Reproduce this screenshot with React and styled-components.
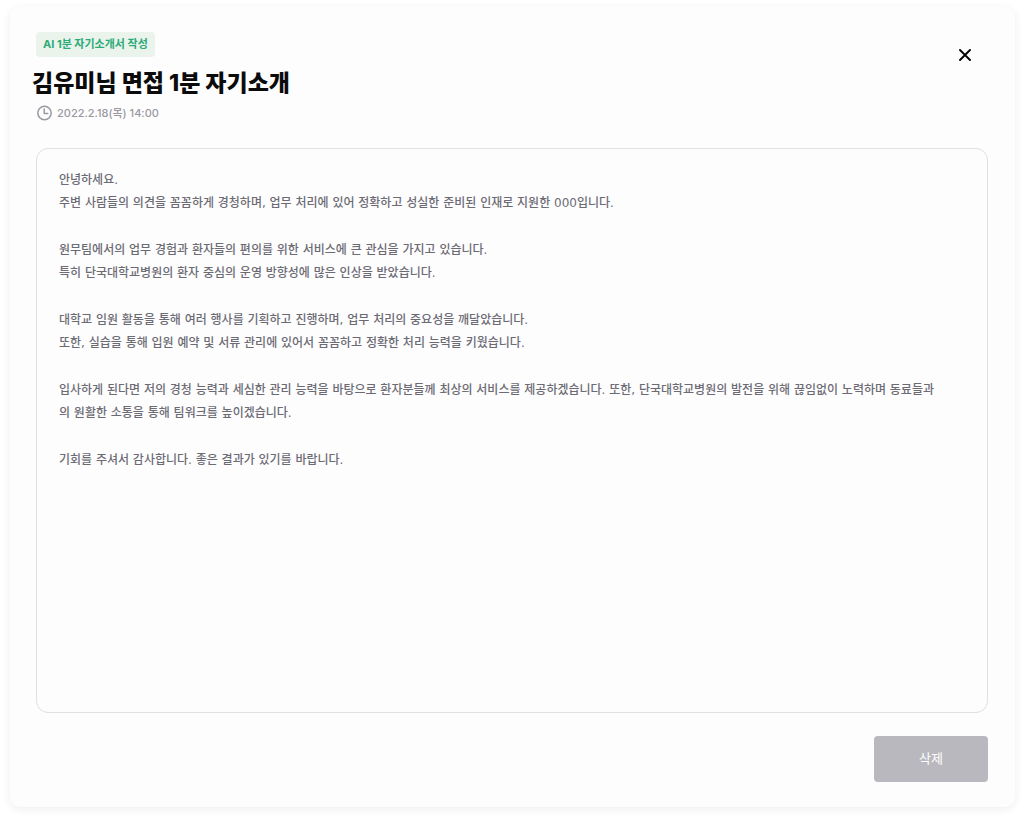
import React from 'react';
import styled, { createGlobalStyle } from 'styled-components';

const GlobalStyle = createGlobalStyle`
  * {
    box-sizing: border-box;
  }

  body {
    margin: 0;
    background: #fff;
    font-family: Inter, 'Noto Sans CJK KR', sans-serif;
  }
`;

const Page = styled.div`
  display: flex;
  min-height: 100vh;
  padding: 7px 9px 11px 10px;
`;

const Modal = styled.main`
  display: flex;
  flex: 1;
  flex-direction: column;
  min-width: 0;
  padding: 25px 27px 25px 26px;
  border-radius: 10px;
  background: #fdfdfe;
  box-shadow: 0 2px 10px rgba(0, 0, 0, 0.07);
`;

const Header = styled.header`
  display: flex;
  align-items: flex-start;
  justify-content: space-between;
`;

const Heading = styled.div`
  display: flex;
  flex-direction: column;
  align-items: flex-start;
`;

const Badge = styled.span`
  padding: 0 7px;
  border-radius: 4px;
  background: #ebf4ec;
  color: #2bab78;
  font-size: 11px;
  font-weight: 700;
  line-height: 25px;
`;

const Title = styled.h1`
  margin: 8px 0 0 -4px;
  color: #0b0b0c;
  font-size: 23px;
  font-weight: 800;
  line-height: 36px;
`;

const DateRow = styled.div`
  display: flex;
  align-items: center;
  gap: 4px;
  margin-top: 4px;
  color: #9a999f;
  font-size: 11px;
  font-weight: 500;
  line-height: 16px;

  svg {
    display: block;
  }
`;

const CloseButton = styled.button`
  display: flex;
  align-items: center;
  justify-content: center;
  width: 24px;
  height: 24px;
  margin: 11px 11px 0 0;
  padding: 0;
  border: 0;
  background: none;
  color: #000;
  cursor: pointer;
`;

const Content = styled.article`
  display: flex;
  flex: 1;
  flex-direction: column;
  gap: 24px;
  margin-top: 27px;
  padding: 20px 44px 20px 22px;
  border: 1px solid #e0e0e2;
  border-radius: 12px;
`;

const Paragraph = styled.p`
  margin: 0;
  color: #6c6b74;
  font-family: 'DejaVu Sans', 'Noto Sans CJK KR', sans-serif;
  font-size: 12px;
  font-weight: 500;
  line-height: 23px;
  white-space: pre-line;
`;

const Footer = styled.footer`
  display: flex;
  justify-content: flex-end;
  margin-top: 23px;
`;

const DeleteButton = styled.button`
  width: 114px;
  height: 46px;
  padding: 0 0 4px;
  border: 0;
  border-radius: 4px;
  background: #b9b8be;
  color: #fff;
  font-family: inherit;
  font-size: 13px;
  cursor: pointer;
`;

const paragraphs = [
  '안녕하세요.\n주변 사람들의 의견을 꼼꼼하게 경청하며, 업무 처리에 있어 정확하고 성실한 준비된 인재로 지원한 000입니다.',
  '원무팀에서의 업무 경험과 환자들의 편의를 위한 서비스에 큰 관심을 가지고 있습니다.\n특히 단국대학교병원의 환자 중심의 운영 방향성에 많은 인상을 받았습니다.',
  '대학교 임원 활동을 통해 여러 행사를 기획하고 진행하며, 업무 처리의 중요성을 깨달았습니다.\n또한, 실습을 통해 입원 예약 및 서류 관리에 있어서 꼼꼼하고 정확한 처리 능력을 키웠습니다.',
  '입사하게 된다면 저의 경청 능력과 세심한 관리 능력을 바탕으로 환자분들께 최상의 서비스를 제공하겠습니다. 또한, 단국대학교병원의 발전을 위해 끊임없이 노력하며 동료들과의 원활한 소통을 통해 팀워크를 높이겠습니다.',
  '기회를 주셔서 감사합니다. 좋은 결과가 있기를 바랍니다.',
];

const ClockIcon = () => (
  <svg width="17" height="16" viewBox="0 0 17 16" fill="none" stroke="currentColor" strokeWidth="1.5" aria-hidden="true">
    <circle cx="8.5" cy="8" r="6.7" />
    <path d="M8.2 4v4.6h3.6" strokeLinecap="round" strokeLinejoin="round" />
  </svg>
);

const CloseIcon = () => (
  <svg width="12" height="12" viewBox="0 0 12 12" fill="none" stroke="currentColor" strokeWidth="1.9" strokeLinecap="round" aria-hidden="true">
    <path d="M1 1l10 10M11 1L1 11" />
  </svg>
);

const App = () => {
  return (
    <>
      <GlobalStyle />
      <Page>
        <Modal>
          <Header>
            <Heading>
              <Badge>AI 1분 자기소개서 작성</Badge>
              <Title>김유미님 면접 1분 자기소개</Title>
              <DateRow>
                <ClockIcon />
                <time dateTime="2022-02-18T14:00">2022.2.18(목) 14:00</time>
              </DateRow>
            </Heading>
            <CloseButton type="button" aria-label="닫기">
              <CloseIcon />
            </CloseButton>
          </Header>
          <Content>
            {paragraphs.map((text) => (
              <Paragraph key={text}>{text}</Paragraph>
            ))}
          </Content>
          <Footer>
            <DeleteButton type="button">삭제</DeleteButton>
          </Footer>
        </Modal>
      </Page>
    </>
  );
};

export default App;
